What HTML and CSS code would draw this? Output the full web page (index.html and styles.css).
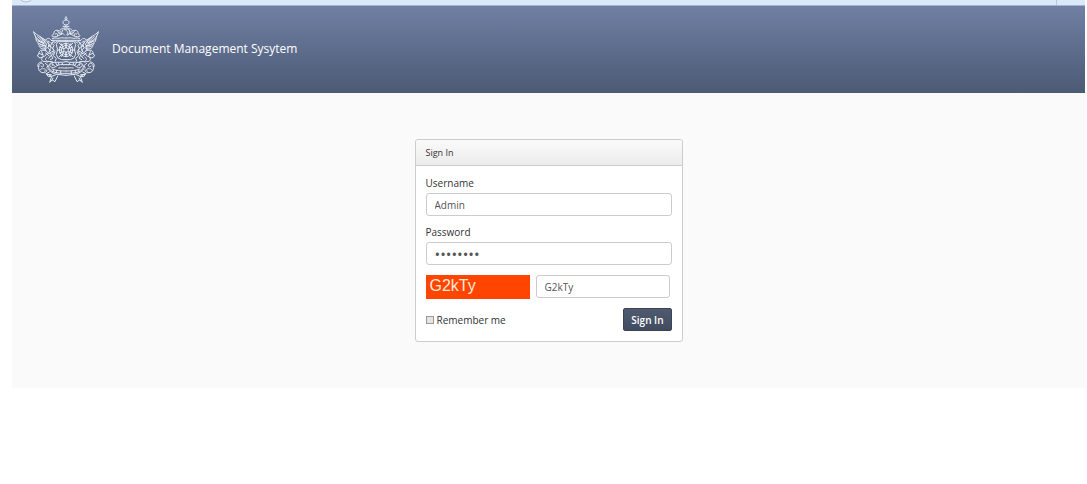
FILE: index.html
```
<!DOCTYPE html>
<html lang="en">
<head>
  <meta charset="UTF-8">
  <title>Document Management Sysytem</title>
  <link rel="stylesheet" href="styles.css">
</head>
<body>

<div class="top-strip">
  <svg class="strip-circle" width="18" height="5" viewBox="0 0 18 5">
    <circle cx="9" cy="-6" r="8" fill="#e8f0fa" stroke="#b3bfce"/>
  </svg>
  <span class="strip-line"></span>
</div>

<header class="header">
  <svg class="emblem" width="66" height="68" viewBox="24 22 198 204" role="img" aria-label="Emblem">
    <defs>
      <g id="side">
        <!-- kalash -->
        <path d="M123 25l-3 5 3 3M123 34c-9 0-11 7-8 11l5 4h3M114 53h9M117 58h6"/>
        <!-- crest -->
        <path d="M121 62c-10-5-15 0-18 5-9-5-17-1-16 8-6 3-7 7-4 9 8 2 17-2 23-6 4-4 9-4 12 0"/>
        <path d="M106 68c-4 5 0 9 5 7M91 76c6-3 9 0 7 5M97 66l6 9M113 64l-5 14"/>
        <path d="M82 90c9-6 15 2 24-2 6-2 10 1 17 0M82 95h41"/>
        <!-- wing -->
        <path d="M26 70c10 10 24 16 38 26l13 18"/>
        <path d="M26 70c4 17 14 26 32 32M31 82c-1 8 8 17 25 21M33 91c0 11 12 17 28 19M39 104c2 8 11 12 24 11M42 112c4 9 12 11 22 8"/>
        <path d="M38 84l16 14M44 83l17 16M50 87l14 19M40 97l18 9M46 108l15 4"/>
        <!-- body -->
        <path d="M62 94c4-7 14-6 16 1l10 3-8 5-4 10c12 6 13 18 3 27l-8 9"/>
        <path d="M65 106c-7 10-5 19 3 25l-9 12M69 97l6 4M70 110c9 4 10 11 3 17"/>
        <path d="M68 100l5 9-5 9 8 6-6 10 9 2M58 120l6 8M60 110l5 6"/>
        <path d="M60 126c-8-4-19-1-18 8l12 5M42 134l-5 8 8 6 10-4M50 129l4 11"/>
        <path d="M56 143c-6 4-9 10-2 15l14 2M66 145c-6 3-6 10 1 13l15 1M62 133l11 9M78 139l6 9-8 5"/>
        <path d="M79 102l8 8-4 10 7 9-5 12 9 8-3 8M88 103l8-5M83 128l-8 4"/>
        <!-- shield -->
        <path d="M123 99H98l-4 9 4 15-4 14 5 11 11 5h13"/>
        <path d="M123 104a20 20 0 0 0 0 40M123 110a14 14 0 0 0 0 28M123 117a7 7 0 0 0 0 14"/>
        <path d="M103 104l8 7M96 124h13M103 144l8-7M109 105l5 12M103 115l13 5M103 133l13-5M110 143l5-11M123 104v13M123 131v13"/>
        <!-- base -->
        <path d="M41 174c0-11 10-14 15-5 1 6-7 8-8 3M41 174c-2 11 4 17 13 18 7 1 11-2 12-8"/>
        <path d="M50 160c-10 1-13 7-11 14M54 180c6-2 10 4 5 8M61 164l8 7-4 7M45 185l6-6"/>
        <path d="M123 159c-14 5-29-1-42 3-8 1-9 8-4 12 6 5 12 3 16-1 8-7 19-5 30-5"/>
        <path d="M82 166l7 6M91 161l5 8M102 162l-3 7M111 163l4 6M77 166c5-2 8 0 6 4"/>
        <path d="M72 169c-4 9 3 17 15 21 11 4 23 4 36 4M69 180c7 9 15 15 26 17l28 3M81 181c12 5 26 6 42 6"/>
        <path d="M123 178c-9 1-13-2-22 0M95 185v8M107 188v8M86 183l-3 7"/>
        <!-- ribbon end -->
        <path d="M73 190l-9 5 16 8-6 18 8-7 8 5 8-17M66 197l13 1M80 203l11-4M84 208l-4 8M64 195l6 9 9-1"/>
      </g>
    </defs>
    <g class="emblem-lines">
      <use href="#side"/>
      <use href="#side" transform="matrix(-1 0 0 1 246 0)"/>
      <path d="M119 63c10 3 12 10 5 16M130 62c7 6 6 13-2 18"/>
    </g>
  </svg>
  <div class="title">Document Management Sysytem</div>
</header>

<main class="content">
  <form class="login-box">
    <div class="login-title">Sign In</div>
    <div class="login-body">
      <div class="form-group">
        <label for="username">Username</label>
        <input type="text" id="username" class="text-input" value="Admin">
      </div>
      <div class="form-group">
        <label for="password">Password</label>
        <input type="password" id="password" class="text-input password-input" value="password">
      </div>
      <div class="captcha-row">
        <div class="captcha">G2kTy</div>
        <input type="text" class="text-input captcha-input" value="G2kTy" aria-label="Captcha">
      </div>
      <div class="form-footer">
        <div class="remember">
          <input type="checkbox" id="remember">
          <label for="remember">Remember me</label>
        </div>
        <button type="button">Sign In</button>
      </div>
    </div>
  </form>
</main>

</body>
</html>
```
FILE: styles.css
```
body {
  margin: 0 2px 0 12px;
  font-family: "Open Sans", sans-serif;
  font-size: 10px;
  color: #333;
  background: #fff;
}
.top-strip {
  display: flex;
  justify-content: space-between;
  height: 5px;
  padding: 0 28px 0 5px;
  background: #dbe8f8;
  border-bottom: 1px solid #a5b3cb;
}
.strip-line {
  width: 1px;
  background: #b9c8dc;
}
.header {
  display: flex;
  align-items: center;
  gap: 13px;
  height: 87px;
  padding-left: 21px;
  background: linear-gradient(#7080a4, #4c5a75);
}
.emblem-lines {
  fill: none;
  stroke: #e6eaf1;
  stroke-width: 3;
  stroke-linecap: round;
  stroke-linejoin: round;
}
.title {
  padding-bottom: 3px;
  color: #fff;
  font-size: 12px;
}
.content {
  padding: 46px 0;
  background: #fafafa;
}
.login-box {
  box-sizing: border-box;
  width: 268px;
  margin: 0 auto;
  background: #fff;
  border: 1px solid #ccc;
  border-radius: 3px;
}
.login-title {
  padding: 0 10px;
  font-size: 9px;
  line-height: 25px;
  background: linear-gradient(#fafafa, #ececec);
  border-bottom: 1px solid #ccc;
  border-radius: 3px 3px 0 0;
}
.login-body {
  padding: 10px;
}
.form-group {
  margin-bottom: 9px;
}
.form-group label {
  display: block;
  margin-bottom: 3px;
  line-height: 14px;
}
.text-input {
  box-sizing: border-box;
  display: block;
  width: 100%;
  height: 23px;
  padding: 0 8px;
  font-family: inherit;
  font-size: 10px;
  color: #555;
  background: #fff;
  border: 1px solid #ccc;
  border-radius: 3px;
}
.password-input {
  font-size: 15px;
}
.captcha-row {
  display: flex;
  gap: 6px;
  margin: 10px 0 9px;
  padding-right: 2px;
}
.captcha {
  flex: none;
  width: 100px;
  height: 24px;
  padding-left: 4px;
  font-family: "Liberation Sans", Arial, sans-serif;
  font-size: 16px;
  line-height: 22px;
  color: #ffe9d6;
  background: #ff4500;
}
.captcha-input {
  flex: 1;
  min-width: 0;
}
.form-footer {
  display: flex;
  justify-content: space-between;
  align-items: center;
}
.remember {
  display: flex;
  align-items: center;
  gap: 3px;
}
.remember input {
  appearance: none;
  box-sizing: border-box;
  width: 8px;
  height: 8px;
  margin: 0;
  background: #e4e4e4;
  border: 1px solid #999;
}
.remember input:checked {
  background: #4b556b;
}
button {
  height: 23px;
  padding: 0 7px;
  font-family: inherit;
  font-size: 10px;
  font-weight: 600;
  color: #fff;
  background: linear-gradient(#4f5a70, #424c60);
  border: 1px solid #3b4456;
  border-radius: 2px;
  cursor: pointer;
}
```
